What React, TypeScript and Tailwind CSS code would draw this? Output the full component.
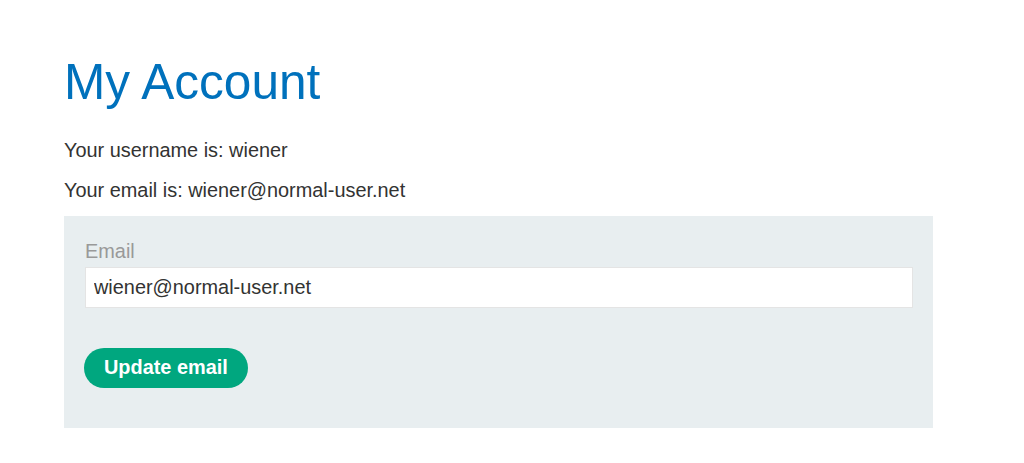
export default function App() {
  return (
    <div className="min-h-[463px] bg-white font-['Liberation_Sans',Arial,sans-serif] text-[#333332]">
      <div className="pl-[64px] pt-[52px]">
        <div className="w-[869px]">
          <h1 className="text-[49.6px] leading-[60px] text-[#0071bc]">My Account</h1>
          <p className="mt-[25px] text-[19.9px] leading-[26px]">Your username is: wiener</p>
          <p className="mt-[14px] text-[19.9px] leading-[26px]">Your email is: wiener@normal-user.net</p>
          <form
            className="mt-[13px] bg-[#e8eef0] pl-[21px] pr-[20px] pt-[22px] pb-[40px]"
            onSubmit={(e) => e.preventDefault()}
          >
            <label className="block text-[19.9px] leading-[26px] text-[#999999]">Email</label>
            <input
              type="email"
              defaultValue="wiener@normal-user.net"
              className="mt-[3px] block w-full h-[41px] bg-white border border-[#e4e4e4] px-[8px] text-[19.9px] text-[#333332] outline-none"
            />
            <button
              type="submit"
              className="mt-[40px] -ml-[1px] h-[40px] px-[20px] rounded-full bg-[#00a77f] text-white font-bold text-[19.9px]"
            >
              Update email
            </button>
          </form>
        </div>
      </div>
    </div>
  );
}
